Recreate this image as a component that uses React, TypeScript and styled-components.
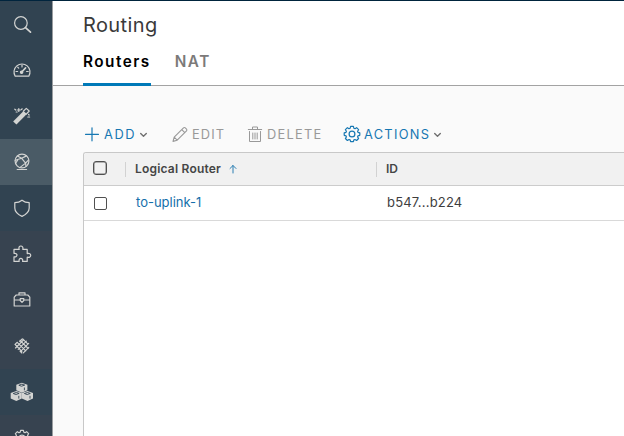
import React from 'react';
import styled, { createGlobalStyle } from 'styled-components';

const GlobalStyle = createGlobalStyle`
  * { box-sizing: border-box; }
  body { margin: 0; overflow: hidden; background: #fafafa; font-family: Inter, sans-serif; }
`;

const Page = styled.div`
  display: flex;
  width: 624px;
  height: 436px;
  overflow: hidden;
  border-top: 1px solid #00243d;
`;

const Sidebar = styled.nav`
  display: flex;
  flex-direction: column;
  flex: 0 0 53px;
  height: 435px;
  overflow: hidden;
  background: #314351;
  border-right: 1px solid #9a9da0;
`;

const NavItem = styled.a<{ $tone?: string }>`
  display: flex;
  flex: 0 0 46px;
  align-items: center;
  padding-left: 10px;
  background: ${(p) => p.$tone ?? 'transparent'};
  color: #d3d4d2;
`;

const Glyph = styled.svg`
  flex: none;
  display: block;
  overflow: visible;
  fill: none;
  stroke: currentColor;
  stroke-width: 1.2;
  stroke-linecap: round;
  stroke-linejoin: round;
`;

const Main = styled.main`
  display: flex;
  flex-direction: column;
  flex: 1;
  min-width: 0;
`;

const Header = styled.header`
  height: 85px;
  padding: 10px 0 0 30px;
  background: #fff;
  border-bottom: 1px solid #a3a3a3;
`;

const Title = styled.h1`
  margin: 0;
  color: #3a3a3a;
  font-size: 20px;
  font-weight: 400;
  line-height: 28px;
  letter-spacing: 0.4px;
`;

const Tabs = styled.div`
  display: flex;
  gap: 24px;
  height: 47px;
`;

const Tab = styled.a<{ $active?: boolean }>`
  height: 47px;
  padding-top: 12px;
  color: ${(p) => (p.$active ? '#000' : '#7c7a79')};
  border-bottom: 3px solid ${(p) => (p.$active ? '#0079b8' : 'transparent')};
  font-size: 15.3px;
  font-weight: 600;
  line-height: 22px;
  letter-spacing: 1.5px;
`;

const Toolbar = styled.div`
  display: flex;
  align-items: center;
  height: 36px;
  margin-top: 30px;
  padding-left: 31px;
`;

const Action = styled.button<{ $width: number; $enabled?: boolean; $spacing: number }>`
  display: flex;
  align-items: center;
  flex: 0 0 ${(p) => p.$width}px;
  height: 36px;
  padding: 0;
  border: 0;
  background: none;
  color: ${(p) => (p.$enabled ? '#1677b2' : '#999')};
  font: 400 12.8px/20px Inter, sans-serif;
  letter-spacing: ${(p) => p.$spacing}px;
`;

const Label = styled.span`
  margin-left: 4px;
  padding-top: 1px;
`;

const Chevron = styled(Glyph)`
  margin-left: 3px;
  color: #707070;
  stroke-width: 1.4;
`;

const Table = styled.section`
  flex: 1;
  margin-left: 30px;
  background: #fff;
  border: 1px solid #c8c8c8;
  border-width: 1px 0 0 1px;
  border-top-left-radius: 3px;
  overflow: hidden;
`;

const Row = styled.div<{ $head?: boolean }>`
  display: flex;
  align-items: center;
  height: ${(p) => (p.$head ? 33 : 35)}px;
  padding-left: ${(p) => (p.$head ? 9 : 10)}px;
  background: ${(p) => (p.$head ? '#f1f1f1' : '#fff')};
  border-bottom: 1px solid ${(p) => (p.$head ? '#ccc' : '#d9d9d9')};
  color: #3e3e3e;
  font-size: 13px;
  line-height: 20px;
`;

const Checkbox = styled.span<{ $head?: boolean }>`
  flex: none;
  width: ${(p) => (p.$head ? 14 : 13)}px;
  height: ${(p) => (p.$head ? 14 : 13)}px;
  margin-bottom: ${(p) => (p.$head ? 2 : 0)}px;
  border: 1px solid #505050;
  box-shadow: ${(p) => (p.$head ? 'inset 0 0 0 0.5px #777' : 'none')};
  border-radius: ${(p) => (p.$head ? 3 : 2)}px;
`;

const HeadCell = styled.div<{ $width?: number; $offset: number; $spacing: number }>`
  display: flex;
  align-items: center;
  flex: 0 0 ${(p) => (p.$width ? p.$width + 'px' : 'auto')};
  height: 15px;
  margin-left: ${(p) => p.$offset}px;
  padding-left: 9px;
  border-left: 1px solid #d2d2d2;
  color: #454545;
  font-size: 12px;
  font-weight: 600;
  letter-spacing: ${(p) => p.$spacing}px;
`;

const SortArrow = styled(Glyph)`
  margin-left: 8px;
  color: #2b7fb3;
  stroke-width: 1;
`;

const RouterLink = styled.a`
  flex: 0 0 251px;
  margin-left: 29px;
  padding-bottom: 2px;
  color: #1470ab;
  letter-spacing: 0px;
`;

const Identifier = styled.span`
  padding-bottom: 2px;
  letter-spacing: 0.2px;
`;

type IconProps = { children: React.ReactNode };
const NavIcon = ({ children }: IconProps) => (
  <Glyph width="24" height="24" viewBox="0 0 24 24">{children}</Glyph>
);

const Gear = () => (
  <>
    <circle cx="12" cy="12" r="2.9" />
    <path d="M10.6 4.4h2.8l.5 1.9 1.1.4 1.6-1 2 2-1 1.6.4 1.1 1.8.5v2.4l-1.8.5-.4 1.1 1 1.6-2 2-1.6-1-1.1.4-.5 1.8h-2.8l-.5-1.8-1.1-.4-1.6 1-2-2 1-1.6-.4-1.1-1.8-.5v-2.4l1.8-.5.4-1.1-1-1.6 2-2 1.6 1 1.1-.4Z" />
  </>
);

const Down = () => <Chevron width="9" height="8" viewBox="0 0 9 8"><path d="m1.7 3.6 2.8 2.7 2.8-2.7" /></Chevron>;

const Cube = ({ x, y }: { x: number; y: number }) => (
  <g transform={`translate(${x} ${y})`}>
    <path d="m5.7 0 5.5 2v5.6L5.7 10 .1 7.5V2Z" fill="currentColor" stroke="none" />
    <path d="m3 2.4 2.7-.9 2.8.9-2.8 1ZM8.2 5.2v2" stroke="#314351" strokeWidth="0.9" />
  </g>
);

export default function App() {
  return (
    <>
      <GlobalStyle />
      <Page>
        <Sidebar>
          <NavItem>
            <NavIcon><circle cx="10.9" cy="11" r="6.3" /><path d="m15.5 15.7 5 4.5" strokeWidth="1.7" /></NavIcon>
          </NavItem>
          <NavItem>
            <NavIcon>
              <path d="M5.2 18.2a8 8 0 1 1 13.6 0Z" />
              <path d="M12 7v2M6 13.5h1.6M16.6 13.5h1.6M7.7 9.2l1 1" />
              <circle cx="11.6" cy="14.2" r="1.2" fill="currentColor" />
              <path d="m12.2 13.5 3.4-3.6" strokeWidth="1.6" />
            </NavIcon>
          </NavItem>
          <NavItem>
            <NavIcon>
              <path d="M4.8 19 15.2 8.5" strokeWidth="4.6" strokeLinecap="butt" />
              <path d="m13.3 7.2 3-2.8 2.9 2.6-2.8 3M4.8 5.2l1 .8M8.8 4.5v3M7.3 6h3M12.2 4.8l-1 .9M6.2 8h1M18.6 10.5l.5.5M17.8 13h1.8" />
            </NavIcon>
          </NavItem>
          <NavItem $tone="#4a5b66">
            <NavIcon>
              <circle cx="12" cy="11" r="6.9" />
              <path d="m7.4 6 4.3 2.3 4.8-2.4M5.2 10.3l6.5-2 3.9 4.8-5.8 4.5M5.5 13.5l2.4-3.8M15.6 13.1l3-3.2M15.6 13.1l.4 3.2M7.2 19.5h9.4" />
            </NavIcon>
          </NavItem>
          <NavItem>
            <NavIcon><path d="M12 4.2c2 1.6 4.5 2.4 7.2 2.5V12c0 3.6-2.4 6.1-7.2 8.4C7.2 18.1 4.8 15.6 4.8 12V6.7c2.8-.1 5.2-.9 7.2-2.5Z" /></NavIcon>
          </NavItem>
          <NavItem $tone="#374350">
            <NavIcon><path d="M4 7.4h5.2C7.6 3.1 13.9 2.6 12.8 7.4h4.4v4.2c4.7-1.6 4.7 5 0 3.6v4.2h-4.6c1-4-4.5-4-3.4 0H4v-4.6c4 .7 4-4.2 0-3.4Z" /></NavIcon>
          </NavItem>
          <NavItem $tone="#374350">
            <NavIcon><path d="M4.2 18V9.2l2-2.2h11.6l2 2.2V18ZM9 7V4.8h6V7M4.5 12h5.3M14.2 12h5.3M10.2 10.7h3.6v1.8L12 14.3l-1.8-1.8Z" /></NavIcon>
          </NavItem>
          <NavItem $tone="#374350">
            <NavIcon>
              <path d="m5 10.5 2.1-2.1M5.5 14l8-8M8.2 15.3l8.2-8.2M10.7 17.3l8-8M13.3 18.8l5.5-5.5M7.2 8.3l8.5 8.5M5.6 11l6.3 6.3M10 6.3l8.2 8.2M12.7 4.8l5 5M11.8 19l-1.8-1.8M12.2 5l-2.5 2.5" strokeWidth="1.15" />
            </NavIcon>
          </NavItem>
          <NavItem>
            <NavIcon><Cube x={6.2} y={2.7} /><Cube x={0.6} y={11} /><Cube x={11.8} y={11} /></NavIcon>
          </NavItem>
          <NavItem $tone="#374350">
            <NavIcon><Gear /></NavIcon>
          </NavItem>
        </Sidebar>
        <Main>
          <Header>
            <Title>Routing</Title>
            <Tabs>
              <Tab $active>Routers</Tab>
              <Tab>NAT</Tab>
            </Tabs>
          </Header>
          <Toolbar>
            <Action $enabled $width={88} $spacing={1.6}>
              <Glyph width="16" height="16" viewBox="0 0 16 16"><path d="M8 1.8v13M1.5 8.3h13" /></Glyph>
              <Label>ADD</Label><Down />
            </Action>
            <Action $width={75} $spacing={1.1}>
              <Glyph width="16" height="16" viewBox="0 0 16 16"><path d="m1 15.4 1.2-4.2L11.5 1.9a1.3 1.3 0 0 1 1.8 0l1.2 1.2a1.3 1.3 0 0 1 0 1.8L5.2 14.2ZM9.8 3.6l3 3M2.2 11.2l3 3" strokeWidth="1.1" /></Glyph>
              <Label>EDIT</Label>
            </Action>
            <Action $width={97} $spacing={1.3}>
              <Glyph width="16" height="16" viewBox="0 0 16 16"><path d="M1.3 3.5h13.4M5.5 3.5V1h5v2.5M2.5 5.5v10h11v-10M5.8 7v6M8 7v6M10.2 7v6" strokeWidth="1" /></Glyph>
              <Label>DELETE</Label>
            </Action>
            <Action $enabled $width={110} $spacing={1.3}>
              <Glyph width="16" height="16" viewBox="4 4 16 16"><Gear /></Glyph>
              <Label>ACTIONS</Label><Down />
            </Action>
          </Toolbar>
          <Table>
            <Row $head>
              <Checkbox $head />
              <HeadCell $offset={18} $width={251} $spacing={0.2}>
                Logical Router
                <SortArrow width="8" height="10" viewBox="0 0 8 10"><path d="M4 9V1.5M1 4.5l3-3 3 3" /></SortArrow>
              </HeadCell>
              <HeadCell $offset={0} $spacing={0}>ID</HeadCell>
            </Row>
            <Row>
              <Checkbox />
              <RouterLink>to-uplink-1</RouterLink>
              <Identifier>b547...b224</Identifier>
            </Row>
          </Table>
        </Main>
      </Page>
    </>
  );
}
